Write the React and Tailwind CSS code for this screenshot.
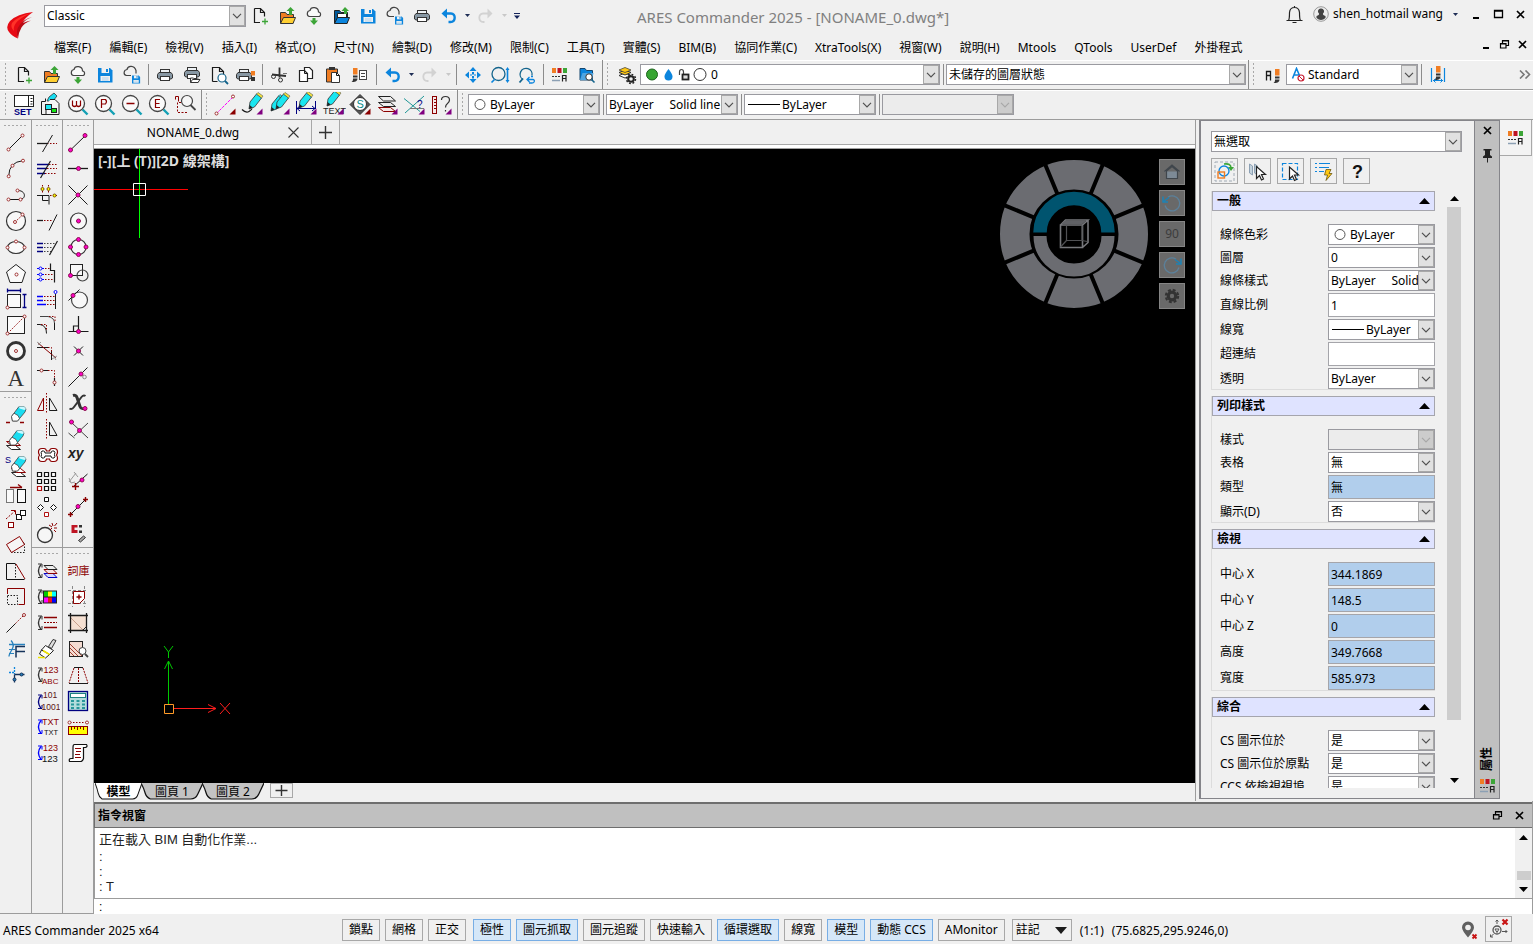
import React from 'react';

// ---------- Drawing helpers ----------
const L = ({ d, c = '#1a1a1a', f = 'none', w = 1, dash }) => (
  <path d={d} stroke={c} fill={f} strokeWidth={w} strokeDasharray={dash} />
);
const Node = ({ x, y, c = '#a03434', f = '#fff' }) => (
  <circle cx={x} cy={y} r="1.5" fill={f} stroke={c} />
);
const Snap = ({ x, y }) => (
  <circle cx={x} cy={y} r="2" fill="#ff00c8" stroke="#8c0f50" />
);
const Txt = ({ x, y, s = 8, c = '#8b0000', children, bold, italic, serif }) => (
  <text
    x={x}
    y={y}
    fontSize={s}
    fill={c}
    fontWeight={bold ? 700 : 400}
    fontStyle={italic ? 'italic' : 'normal'}
    fontFamily={serif ? 'Liberation Serif, serif' : 'Liberation Sans, Noto Sans CJK TC, sans-serif'}
  >
    {children}
  </text>
);
const Corner = ({ c = '#800080' }) => <path d="M16.5 22.5h6v-6z" fill={c} />;
const Lens = ({ children, c = '#444' }) => (
  <>
    <path d="M17.5 17.5l5 5" stroke="#14a0b4" strokeWidth="2.4" />
    <circle cx="11.5" cy="11.5" r="8" fill="#fafafa" stroke={c} strokeWidth="1.3" />
    {children}
  </>
);
const Pencil = ({ x = 0, y = 0, tip = '#f5e63c' }) => (
  <g transform={`translate(${x} ${y})`}>
    <path d="M10 17l1-7 6.500-8 5 4-7 9z" fill="#19e6f0" stroke="#333" strokeWidth=".8" />
    <path d="M17.500 2l1.500-1.500 5 3.500-1.500 2z" fill={tip} stroke="#555" strokeWidth=".6" />
    <path d="M10 17l.6-4 3 2.500z" fill="#222" />
  </g>
);
const Eraser = ({ y = 0 }) => (
  <g transform={`translate(0 ${y})`} stroke="#444" strokeWidth=".8">
    <path d="M8.500 14.500L16 4.500h5l2 2.500-1 3-7.500 9h-5z" fill="#19dcf0" />
    <path d="M8.500 14.500l2.500-3.300 4 2.300 1.500 3-2 2.500h-5z" fill="#fff" />
    <path d="M16 4.500h5l2 2.500-1.500 1-5-1.500z" fill="#c8f8ff" stroke="none" />
  </g>
);
const Cycle = ({ c = '#333', y = 0 }) => (
  <g transform={`translate(0 ${y})`} stroke={c} fill="none">
    <path d="M6 6.500Q1 12.500 6 19.500" strokeWidth="1.300" />
    <path d="M3 6h4v3.500M3 19.500h4v-3.500" />
  </g>
);
const Sheets = ({ a = '#222', b = '#8b0000', e = '#0000c8' }) => (
  <g strokeWidth="1">
    <path d="M9 15.500h9l4 4h-9z" fill="#d8d8ff" stroke={e} />
    <path d="M9 11.500h9l4 4h-9z" fill="#f6e0e0" stroke={b} />
    <path d="M9 7.500h9l4 4h-9z" fill="#eee" stroke={a} />
  </g>
);
const CloudShape = () => (
  <path
    d="M8.500 13.500h9c2.500 0 3-4 0-4.500 0-5-7.500-6-8.500-1.500-3.500.5-3.500 5.500-.5 6z"
    fill="#fafafa"
    stroke="#444"
    strokeWidth="1.200"
  />
);
const PrinterShape = ({ x = 0, y = 0 }) => (
  <g transform={`translate(${x} ${y})`}>
    <rect x="8.500" y="7.500" width="9" height="4" fill="#eef2f5" stroke="#333" />
    <path d="M7 10.500h12l1.500 2v3.500l-1.500 1h-12l-1.500-1v-3.500z" fill="#8797a3" stroke="#333" />
    <rect x="8.500" y="14.500" width="9" height="4" fill="#fff" stroke="#333" />
  </g>
);
const FloppyShape = ({ x = 6, y = 6, s = 1 }) => (
  <g transform={`translate(${x} ${y}) scale(${s})`}>
    <path d="M0 0h12l2.500 2.500v12H0z" fill="#0c85dd" />
    <rect x="3.500" y="0" width="7.500" height="5" fill="#f0f0f0" />
    <rect x="8" y="1" width="2" height="3" fill="#0c85dd" />
    <rect x="2.500" y="8" width="9.500" height="5" fill="#f0f0f0" />
    <path d="M4 10h6.500M4 12h6.500" stroke="#8cc3ec" strokeWidth=".7" />
  </g>
);
const PaletteBars = () => (
  <>
    <rect x="5" y="6" width="4" height="5" fill="#f07d23" />
    <rect x="10.500" y="6" width="4" height="5" fill="#be1423" />
    <rect x="16" y="6" width="4" height="5" fill="#3ca537" />
    <path d="M5 14.500h8" stroke="#333" strokeDasharray="2 1" />
    <path d="M5 18.500h8" stroke="#8ca0b4" strokeWidth="1.500" />
    <path d="M15.500 19.500v-6h3.500v6M15.500 16.500h3.500" stroke="#222" fill="none" strokeWidth="1.200" />
  </>
);
const BrushShape = ({ x = 0, y = 0 }) => (
  <g transform={`translate(${x} ${y})`}>
    <rect x="2" y="0" width="4.500" height="6.500" fill="#f07d23" />
    <rect x="2" y="7.500" width="4.500" height="2" fill="#333" />
    <path d="M2 10.500h4.500c0 3-3 3.500-6 3.500 1.500-1 1.500-2 1.500-3.500z" fill="#333" />
  </g>
);

const dots = '1.500 1.500';
const R = '#8b0000';
const N = '#000080';
const B = '#0000ff';

// ---------- Icons, all on a 25 x 25 grid ----------
const ICONS = {
  newFile: (
    <>
      <L d="M7.500 5.500h6l4 4v4M7.500 5.500v14h5.500M13.500 5.500v4h4" w={1.2} />
      <L d="M15 18.500h6M18 15.500v6" c="#3ca537" w={1.3} />
    </>
  ),
  open: (
    <>
      <path d="M6.500 20V9.500h5l1.500 2h6.500V20z" fill="#f07d23" stroke="#333" />
      <path d="M6.500 20.500l3-6h12l-2.500 6z" fill="#ffcf32" stroke="#333" />
      <path d="M15 12V8h-2.500L16.500 4l4 4H18v4z" fill="#3ca537" />
    </>
  ),
  openBlue: (
    <>
      <path d="M6.500 20V7.500h5l1.500 2h6.500V20z" fill="#005a9b" stroke="#222" />
      <path d="M9.500 10.500h9v6h-9z" fill="#fff" stroke="#222" />
      <path d="M6.500 20.500l3-6h12l-2.500 6z" fill="#0c85dd" stroke="#222" />
      <path d="M16 11V8h-2.500L17 4l4 4H19v3z" fill="#3ca537" />
    </>
  ),
  cloudDown: (
    <>
      <CloudShape />
      <path d="M11.500 15h3v2.500H17L13 22l-4-4.500h2.500z" fill="#3ca537" />
    </>
  ),
  save: <FloppyShape />,
  cloudSave: (
    <>
      <path d="M12 13.500H7.500c-3.500-.5-3-5.500.5-6 1-4.500 7.500-4 9 1v3" fill="none" stroke="#444" strokeWidth="1.200" />
      <FloppyShape x={13} y={13.5} s={0.56} />
    </>
  ),
  printer: <PrinterShape />,
  printBatch: (
    <>
      <PrinterShape y={-2} />
      <path d="M11.500 20v-4h3l1 1h4v3z" fill="#fff" stroke="#333" />
      <path d="M11.500 20.500l2-3h7.500l-2 3z" fill="#fff" stroke="#333" />
    </>
  ),
  preview: (
    <>
      <L d="M6.500 19.500v-14h7l4 4v3M13.500 5.500v4h4M6.500 19.500h5" w={1.2} />
      <circle cx="16" cy="16" r="4" fill="#fff" stroke="#14648c" strokeWidth="1.200" />
      <L d="M19 19l3 3" c="#14648c" w={1.8} />
    </>
  ),
  printStyle: (
    <>
      <PrinterShape x={-2} />
      <rect x="18" y="9" width="4" height="4.500" fill="#f07d23" />
      <rect x="18" y="15" width="4" height="4" fill="#333" />
    </>
  ),
  cut: (
    <>
      <L d="M13.500 5.500v10M6 12.500l14 1.500" w={1.8} c="#333" />
      <circle cx="7.500" cy="14.500" r="2" fill="none" stroke="#333" />
      <circle cx="14.500" cy="18" r="2" fill="none" stroke="#333" />
      <L d="M17 11.500h4" c="#777" />
    </>
  ),
  copy: (
    <>
      <path d="M11.500 5.500h5l3 3v8h-8z" fill="#fff" stroke="#222" strokeWidth="1.200" />
      <path d="M6.500 8.500h5l3 3v8h-8z" fill="#fff" stroke="#222" strokeWidth="1.200" />
      <L d="M11.500 8.500v3h3" />
    </>
  ),
  paste: (
    <>
      <path d="M6.500 7h11v13h-11z" fill="#f07d23" stroke="#333" />
      <rect x="9" y="5" width="6" height="3" fill="#333" />
      <path d="M11.500 10.500h5l3 3v7h-8z" fill="#fff" stroke="#333" />
      <L d="M16.500 10.500v3h3" />
    </>
  ),
  matchProps: (
    <>
      <BrushShape x={4} y={6} />
      <rect x="12.500" y="8.500" width="7" height="9" fill="#fff" stroke="#444" />
      <L d="M14 11.500h4M14 14.500h4" c="#444" />
    </>
  ),
  undo: (
    <>
      <path d="M7 10.500h8c5 0 5 8.500-.5 8.500h-2" fill="none" stroke="#0c85dd" strokeWidth="2.400" />
      <path d="M5.500 10.500l5.500-5v10z" fill="#0c85dd" />
    </>
  ),
  redo: (
    <>
      <path d="M18 10.500h-8c-5 0-5 8.500.5 8.500h1" fill="none" stroke="#d2d2d2" strokeWidth="1.800" />
      <path d="M19.500 10.500l-5-5v10z" fill="#d2d2d2" />
    </>
  ),
  pan: (
    <g fill="#0c85dd">
      <path d="M13 5l3.500 4h-7zM13 21l3.500-4h-7zM5 13l4-3.500v7zM21 13l-4-3.500v7z" />
      <path d="M12 10h2v2.500h-2zM12 14h2v2.500h-2zM10 12.500h2v1h-2zM14 12.500h2v1h-2z" />
    </g>
  ),
  zoomDyn: (
    <>
      <circle cx="11.500" cy="12" r="6.500" fill="none" stroke="#14648c" strokeWidth="1.300" />
      <L d="M7.500 17.500l-3 3M20.500 7v12" c="#0c85dd" w={1.600} />
      <path d="M20.500 5l2 3h-4zM20.500 21l2-3h-4z" fill="#0c85dd" />
    </>
  ),
  zoomPrev: (
    <>
      <path d="M9 17.500a6 6 0 1 1 9-4" fill="none" stroke="#14648c" strokeWidth="1.300" />
      <L d="M9 16.500l-3.500 4" c="#14648c" w={1.800} />
      <path d="M13 17.500h6c2 0 2 3.500-1 3.500h-3M15.500 15l-2.500 2.500 2.500 2.500M17 14.500h2" fill="none" stroke="#0c85dd" strokeWidth="1.300" />
    </>
  ),
  props: <PaletteBars />,
  refs: (
    <>
      <path d="M6 18V6.500h5l1.500 2h6V18z" fill="#0c85dd" stroke="#14466e" />
      <path d="M6 18l2.500-7h11L18 18z" fill="#50a5e1" />
      <circle cx="15" cy="15" r="3.200" fill="#fff" stroke="#333" />
      <L d="M17.500 17.500l3 3" w={1.600} c="#14648c" />
    </>
  ),
  layersGear: (
    <>
      <path d="M5 13.500l6-2.500 6 2.500-6 2.500z" fill="#fff" stroke="#333" />
      <path d="M5 10.500l6-2.500 6 2.500-6 2.500z" fill="#ffc814" stroke="#333" />
      <path d="M5 8l6-2.500L17 8l-6 2.500z" fill="#ffc814" stroke="#333" strokeWidth=".7" />
      <circle cx="17" cy="17" r="2.800" fill="#f0f0f0" stroke="#222" strokeWidth="2" />
      <circle cx="17" cy="17" r="4.500" fill="none" stroke="#222" strokeWidth="1.500" strokeDasharray="1.800 1.730" />
    </>
  ),
  textStyle: (
    <>
      <L d="M6.500 18.500v-9h4v9M6.500 13.500h4" w={1.3} />
      <BrushShape x={13} y={7} />
    </>
  ),
  dimStyle: (
    <>
      <L d="M6.500 6v14M19.500 6v14" c="#0c85dd" w={1.2} />
      <BrushShape x={9} y={4} />
      <L d="M8 18.500h10M10.500 16.500l-2 2 2 2M15.500 16.500l2 2-2 2" c="#0c85dd" />
    </>
  ),
  setWin: (
    <>
      <rect x="3.500" y="3.500" width="19" height="11" fill="#fff" stroke="#222" />
      <L d="M17.500 3.500v11M19.500 6.500h2M19.500 9.500h2M19.500 12h2" />
      <Txt x={3} y={23} s={9} c={N} bold>SET</Txt>
    </>
  ),
  layersIso: (
    <>
      <L d="M3.500 22.500v-13h4v-3M3.500 22.500h6" />
      <path d="M9 9l2-4 5-4 3 3-4 5z" fill="#19dcf0" stroke="#333" strokeWidth=".8" />
      <path d="M12 7.500h5l4 4v11h-13v-6" fill="#f6f6f6" stroke="#222" />
      <rect x="7.500" y="12.500" width="6" height="5" fill="#19e6f0" stroke="#222" />
      <rect x="13.500" y="16.500" width="5" height="4" fill="#14e614" stroke="#222" />
    </>
  ),
  zoomW: <Lens><path d="M7.500 8.500v5q2 2 4 0v-4.500 4.500q2 2 4 0v-5" stroke={R} fill="none" strokeWidth="1.200" /></Lens>,
  zoomP: <Lens><path d="M9.500 16v-8.500h4q2 2 0 4.500h-4" stroke={R} fill="none" strokeWidth="1.200" /></Lens>,
  zoomMinus: <Lens><L d="M7.500 11.500h8" c={R} w={1.5} /></Lens>,
  zoomE: <Lens><path d="M14 7.500h-4.500v8h4.500M9.500 11.500h4" stroke={R} fill="none" strokeWidth="1.200" /></Lens>,
  zoomSel: (
    <>
      <L d="M8 10.500h-3.500v10h10" c={R} dash="2 1.500" />
      <L d="M2.500 7.500v-3h3v5" c={R} />
      <circle cx="14" cy="9" r="5.500" fill="#f6f6f6" stroke="#444" strokeWidth="1.200" />
      <L d="M17.500 13l5 5" c="#444" w={1.800} />
    </>
  ),
  lineTool: (
    <>
      <L d="M3.500 21.500L20 5" c="#ff00ff" dash="3 1" />
      <Node x={3.5} y={21.5} />
      <Node x={20} y={4.5} />
      <Corner c="#8b0000" />
    </>
  ),
  pencilCurve: (
    <>
      <L d="M2 17.500q4 4 7 2t3-3" w={1.2} />
      <Pencil x={-1} />
      <Corner />
    </>
  ),
  hatchPens: (
    <>
      <g transform="translate(-6 2)"><Pencil tip="#19e6f0" /></g>
      <Pencil x={-1} />
      <Corner />
    </>
  ),
  dimTool: (
    <>
      <Pencil x={-5} y={-1} />
      <L d="M2.500 9v13M21.500 9v8M3 16.500h18M6 14l-3 2.500 3 2.500M18 14l3 2.500-3 2.500" c={N} />
      <Corner />
    </>
  ),
  textTool: (
    <>
      <g transform="translate(-4 -3)"><Pencil /></g>
      <Txt x={2} y={22} s={9} c="#222">TEXT</Txt>
      <Corner />
    </>
  ),
  symTool: (
    <>
      <path d="M12 2.500l10 10-10 10-10-10z" fill="#555" stroke="#333" />
      <circle cx="12" cy="12" r="6.500" fill="#fff" stroke="#333" />
      <Txt x={8.5} y={16} s={11} c="#0a8c8c">S</Txt>
      <Corner c="#8b0000" />
    </>
  ),
  layerTool: (
    <>
      <path d="M3.500 15.500h12l5 4h-12z" fill="#f6e6e6" stroke={R} />
      <path d="M3.500 10.500h12l5 4h-12z" fill="#eee" stroke="#222" />
      <path d="M3.500 4.500h12l5 4.500h-12z" fill="#eee" stroke="#222" />
      <Corner />
    </>
  ),
  angleTool: (
    <>
      <L d="M2 6.500l16 13M22 4L3 21" c="#1e9696" />
      <Txt x={15} y={16} s={10} c={N}>?</Txt>
      <L d="M8 16.500h14" c="#777" />
      <Corner />
    </>
  ),
  rulerAsk: (
    <>
      <rect x="3.500" y="4.500" width="4" height="17" fill="#f6eaea" stroke={R} />
      <L d="M5 7.500h2M5 10.500h2M5 13.500h2M5 16.500h2" c={R} />
      <L d="M12.500 8q0-3.500 4-3.500t4 3.500q0 2-2 3.500t-2 4M16.500 18v1.500" c="#333" w={1.2} />
      <Corner />
    </>
  ),
  // draw column
  line: <><L d="M5.500 19.500l14-14" /><Node x={5.5} y={19.5} /><Node x={19.5} y={5.5} /></>,
  arc: <><L d="M5.700 20Q6 6 20 4.700" /><Node x={5.7} y={20.3} /><Node x={9.5} y={9.7} /><Node x={20} y={4.7} /></>,
  polyline: <><L d="M5.500 17.500h12c6-1 5-9-2.500-9" /><Node x={5.5} y={17.5} /><Node x={17.5} y={17.5} /><Node x={14.5} y={8.5} /></>,
  circle: <><circle cx="13" cy="13" r="9.500" fill="#f8f8f8" stroke="#333" strokeWidth="1.200" /><L d="M12 14l7.500-7" c={R} dash={dots} /><Node x={12} y={14} /><Node x={19.5} y={6.5} /></>,
  ellipse: <><ellipse cx="13" cy="13.500" rx="8.500" ry="6" fill="#fafafa" stroke="#333" strokeWidth="1.200" /><Node x={4.5} y={13.5} /><Node x={21.5} y={13.5} /><Node x={13} y={7.5} /></>,
  polygon: <><path d="M13 4.500l9.500 7.500-3.500 10.500h-12L3.500 12z" fill="#fafafa" stroke="#222" /><Node x={13.5} y={14.5} /></>,
  rectDim: (
    <>
      <rect x="4.500" y="8.500" width="13" height="13" fill="#fafafa" stroke="#222" />
      <L d="M4.500 2.500v4M17.500 2.500v4M4.500 4.500h13M19.500 8.500h4M19.500 21.500h4M21.500 8.500v13" c={N} w={1.3} />
      <Node x={4.5} y={21.5} />
    </>
  ),
  rect: <><rect x="4.500" y="4.500" width="17" height="17" fill="#fafafa" stroke="#222" /><L d="M5 21L21 5" c={R} dash={dots} /><Node x={4.5} y={21.5} /><Node x={21.5} y={4.5} /></>,
  donut: <><circle cx="13" cy="13" r="8.500" fill="#f8f8f8" stroke="#333" strokeWidth="2.800" /><Node x={13} y={13} /></>,
  text: <Txt x={4.5} y={21.5} s={23} c="#333" serif>A</Txt>,
  erase: <><Eraser /><L d="M3 20.500h4M17 20.500h4" c={R} w={1.4} /></>,
  eraseLayer: (
    <>
      <path d="M3.500 17.500h9l5 4h-9z" fill="#fff" stroke="#222" />
      <path d="M3.500 13.500h9l5 4h-9z" fill="#fff" stroke={R} />
      <g transform="translate(-2 -2)"><Eraser /></g>
    </>
  ),
  eraseS: (
    <>
      <path d="M8.500 18.500h9l5 4h-9z" fill="#fff" stroke="#222" />
      <path d="M8.500 14.500h9l5 4h-9z" fill="#fff" stroke={R} />
      <Eraser y={-2} />
      <Txt x={2} y={9} s={9} c={N}>S</Txt>
    </>
  ),
  copyRect: (
    <>
      <rect x="3.500" y="9.500" width="7" height="13" fill="#fafafa" stroke="#777" />
      <rect x="14.500" y="9.500" width="8" height="13" fill="#fafafa" stroke="#111" />
      <L d="M7 7.500h12M15 4.500l4 3" c={R} w={1.3} />
    </>
  ),
  arrayMove: (
    <>
      <rect x="5.500" y="16.500" width="5" height="5" fill="#fff" stroke={R} />
      <rect x="13.500" y="8.500" width="5" height="5" fill="#fff" stroke="#111" />
      <rect x="17.500" y="4.500" width="5" height="5" fill="#fff" stroke="#111" />
      <L d="M3 13L12 5" c={R} dash="2 1.500" />
      <L d="M8 4.500h4.500v4" c={R} />
    </>
  ),
  rotate: (
    <>
      <rect x="7.500" y="10.500" width="14" height="10" fill="none" stroke="#222" strokeDasharray={dots} />
      <path d="M3.500 12.500l13-8 5 8-13 8z" fill="#f6f6f6" stroke={R} />
    </>
  ),
  stretch: <><path d="M12.500 5.500h-9v16h18" fill="none" stroke="#111" /><L d="M12.500 6v15" dash={dots} /><L d="M13 6l9 15" c={R} /></>,
  scale: <><L d="M4.500 10v-5.500h17v16h-6" c={R} /><L d="M4.500 11.500h10v9h-10z" dash={dots} /></>,
  lengthen: <><L d="M3.500 22.500l9-9" /><L d="M12.500 13.500l7.500-7.500" c={R} dash={dots} /><Node x={21} y={5} /></>,
  alignSp: (
    <>
      <L d="M6 8.500h16M8 4.500q4 4 1 9t-3 7" c="#2882be" w={1.3} />
      <L d="M6 13.500h6M6 17.500h5" c="#2882be" />
      <L d="M22 10.500h-9v11M13 15.500h9" w={1.5} c="#14325a" />
    </>
  ),
  joinPt: (
    <>
      <L d="M6 10.500h6M11.500 5v7" c="#0c85dd" dash="2 1" w={1.3} />
      <L d="M11.500 12.500h10M11.500 12.500v8" w={1.3} c="#14325a" />
      <Node x={11.5} y={17.5} c="#14325a" f="#2882be" />
      <Node x={18.5} y={12.5} c="#14325a" f="#2882be" />
    </>
  ),
  // modify column
  trim: <><L d="M2 13.500h10" w={1.3} /><L d="M12 13.500h10" c={R} dash={dots} /><L d="M7.500 22l10-17" /></>,
  trimMulti: (
    <>
      <L d="M2 8.500h12M2 12.500h10M2 17.500h8" c={N} w={1.3} />
      <L d="M14 8.500h8M12 12.500h10M10 17.500h12" c={R} dash={dots} />
      <L d="M5.500 22l10-17" w={1.2} />
    </>
  ),
  trimCorner: (
    <>
      <L d="M2 13.500h12v9M7.500 13.500v5h6" />
      <L d="M7.500 3v8M13.500 3v8M15 13.500h7" c={R} dash={dots} />
      <Node x={7.5} y={7} f="#ff0" c="#785000" /><Node x={13.5} y={7} f="#ff0" c="#785000" /><Node x={19.5} y={13.5} f="#ff0" c="#785000" />
    </>
  ),
  extend: <><L d="M2 12.500h6" w={1.3} /><L d="M9 12.500h8" c={R} dash={dots} /><L d="M14 22.500l8-16" /></>,
  extendMulti: (
    <>
      <L d="M2 9.500h6M2 13.500h6M2 17.500h6" c={N} w={1.3} />
      <L d="M9 9.500h11M9 13.500h9M9 17.500h7" c="#444" dash={dots} />
      <L d="M14.500 21l8-14" w={1.2} />
    </>
  ),
  extendEdge: (
    <>
      <L d="M7 8.500h8M7 14.500h11M7 19.500h11" c={R} dash={dots} />
      <L d="M2 8.500h7M2 14.500h7M2 19.500h7" c={B} />
      <L d="M15.500 3.500v7h4v12" w={1.2} />
      <Node x={5.5} y={8.5} c={B} /><Node x={5.5} y={14.5} c={B} /><Node x={5.5} y={19.5} c={B} />
    </>
  ),
  extendFence: (
    <>
      <L d="M2 10.500h6M2 14.500h6M2 18.500h9" c={B} w={1.3} />
      <L d="M9 10.500h11M9 14.500h11M12 18.500h8" c={R} dash={dots} />
      <L d="M20.500 8v15" /><Node x={20.5} y={6} c={B} />
    </>
  ),
  fillet: (
    <>
      <L d="M5 4.500h8q6.500 1 6.500 7" c="#444" />
      <L d="M14 4.500h6v6" c={R} dash={dots} />
      <L d="M19.500 11v7M2 12.500h3q6.500 1 6.500 9" />
      <L d="M6 12.500h5.500v6" c={R} dash={dots} />
    </>
  ),
  chamfer: (
    <>
      <L d="M2 9.500h11M16.500 13v9" />
      <L d="M13 9.500h3.500v4" dash={dots} c={R} />
      <L d="M3 5l18 15" c={R} />
      <L d="M2 4l4 3M6 4L3 7M18 17l3 5M22 18l-5 3" c="#999" />
    </>
  ),
  join: (
    <>
      <L d="M2 6.500h11M19.500 14v8" w={1.2} />
      <L d="M13 6.500h6.500v8" c={R} dash={dots} />
      <Node x={6.5} y={6.5} /><Node x={19.5} y={18.5} />
    </>
  ),
  mirror: (
    <>
      <L d="M8.500 8v12.500h-6z" c={R} /><L d="M11.500 3v20" c={R} dash={dots} /><L d="M14.500 8v12.500h7.500z" />
    </>
  ),
  mirrorHalf: <><L d="M11.500 3v20" c={R} dash={dots} /><L d="M14.500 6v13.500h7.500z" /></>,
  bone: (
    <>
      <path d="M7 6.500h2q2 0 2.500 2.500h3q.5-2.500 2.500-2.500h2q3.500 0 3.500 3.500 0 1.500-1 3 1 1.500 1 3 0 3.500-3.500 3.500h-2q-2 0-2.500-2.500h-3q-.5 2.500-2.500 2.500h-2q-3.500 0-3.500-3.500 0-1.500 1-3-1-1.500-1-3 0-3.500 3.500-3.500z" fill="#fff" stroke={R} strokeWidth="1.200" />
      <path d="M7 9h1.500q1.500 0 1.500 2h6q0-2 1.500-2H19q1.500 1 .5 3.500 1 2.500-.5 3.500h-1.500q-1.500 0-1.500-2h-6q0 2-1.500 2H7q-1.500-1-.5-3.500Q5.500 10 7 9z" fill="#fff" stroke="#111" />
    </>
  ),
  grid: (
    <g fill="#fff" stroke="#111" strokeWidth="1.200">
      <path d="M2.500 4.500h4v4h-4zM9.500 4.500h4v4h-4zM16.500 4.500h4v4h-4zM2.500 11.500h4v4h-4zM9.500 11.500h4v4h-4zM16.500 11.500h4v4h-4zM9.500 18.500h4v4h-4zM16.500 18.500h4v4h-4z" />
      <path d="M2.500 18.500h4v4h-4z" stroke="#b01010" />
    </g>
  ),
  polar: (
    <g fill="#fff" stroke="#111">
      <path d="M9.500 3.500h4v4h-4zM5.500 10.500l3 3-3 3-3-3zM18.500 10.500l3 3-3 3-3-3z" />
      <path d="M9.500 18.500h4v4h-4z" stroke="#b01010" />
    </g>
  ),
  explode: (
    <>
      <circle cx="10" cy="15" r="7.500" fill="#f6f6f6" stroke="#333" strokeWidth="1.300" />
      <L d="M15 10l2-2M17 3l1 3M22 3l-2.500 3M22 8h-3M14 5l3 2M19 10l2 2" c={R} />
    </>
  ),
  chLayer: <><Cycle /><Sheets /></>,
  chColor: (
    <>
      <Cycle />
      <rect x="8" y="6.500" width="14" height="13" fill="#222" />
      <path d="M9 7.500h4v5H9z" fill="#0c0" /><path d="M13 7.500h4v5h-4z" fill="#ff0" /><path d="M17 7.500h4v5h-4z" fill="#0ff" />
      <path d="M9 13.500h4v5H9z" fill="#f0f" /><path d="M13 13.500h4v5h-4z" fill="#f01414" /><path d="M17 13.500h4v5h-4z" fill="#00f" />
    </>
  ),
  chLine: <><Cycle /><L d="M9 7.500h13M9 17.500h13" c={R} w={1.3} /><L d="M9 12.500h13" c={R} dash="2 1" /></>,
  paintBrush: (
    <>
      <path d="M18 3.500l3 1-4.500 8-3-2z" fill="#ddd" stroke="#333" />
      <path d="M10.500 9.500l8 5-4 4-8-4.500z" fill="#fff" stroke="#222" />
      <path d="M6.500 14l8 4.500-4 3.500-6-4z" fill="#fff" stroke="#222" />
      <path d="M8 14.500l6.500 4M3 21.500h7" stroke="#f0e600" strokeWidth="1.500" />
    </>
  ),
  chAbc: <><Cycle /><Txt x={8.5} y={11} s={9}>123</Txt><Txt x={7} y={21.500} s={8}>ABC</Txt></>,
  chBits: <><Cycle c={N} y={1} /><Txt x={8} y={10} c="#5a1414" s={8.5}>101</Txt><Txt x={6.500} y={22} c="#5a1414" s={8.5}>1001</Txt></>,
  chTxt: <><Cycle c={B} /><Txt x={7} y={11} s={9}>TXT</Txt><Txt x={9} y={21} s={7.5} c="#111">TXT</Txt></>,
  chNum: <><Cycle c={B} /><Txt x={8} y={10.5} s={9}>123</Txt><Txt x={7} y={22} s={9.5} c="#111">123</Txt></>,
  // snap column
  sEnd: <><L d="M5 19.500l14.500-14" /><Snap x={4.5} y={20} /><Snap x={19} y={5.5} /></>,
  sMid: <><L d="M2 12.500h20" w={1.3} /><Snap x={12.5} y={12.5} /></>,
  sInt: <><L d="M2.500 3.500l19 19M21.500 3.500l-19 19" /><Snap x={12} y={13} /></>,
  sCen: <><circle cx="12.500" cy="13" r="8" fill="#f8f8f8" stroke="#333" strokeWidth="1.200" /><Snap x={12.5} y={13} /></>,
  sQuad: <><circle cx="12.500" cy="13" r="7.500" fill="#f8f8f8" stroke="#333" strokeWidth="1.200" /><Snap x={12.5} y={5.5} /><Snap x={12.5} y={20.5} /><Snap x={4.5} y={13} /><Snap x={20} y={13} /></>,
  sIns: <><rect x="4.500" y="4.500" width="12" height="11" fill="#f8f8f8" stroke="#222" /><circle cx="16.500" cy="15.500" r="5.500" fill="none" stroke="#444" strokeWidth="1.200" /><Snap x={4.5} y={15.5} /></>,
  sTan: <><circle cx="13.500" cy="14" r="8" fill="#f8f8f8" stroke="#444" strokeWidth="1.200" /><L d="M2.500 14.500l11-11" /><Snap x={7} y={9.5} /></>,
  sPerp: <><L d="M12.500 4v15M2.500 19.500h20M7.500 19v-5h5" w={1.2} /><Snap x={12.5} y={19.5} /></>,
  sPoint: <><L d="M8 8.500l9 9M17 8.500l-9 9" /><Snap x={12.5} y={13} /></>,
  sNear: <><L d="M2.500 22.500l19-19" /><Snap x={15} y={10} /><circle cx="18.500" cy="13" r="1.800" fill="none" stroke="#888" /></>,
  sNone: <><L d="M7 5.500q3-1 4 2l3 9q1 2.500 3 2" w={3} c="#333" /><L d="M19.500 6q-2-1.500-4 1L8 17q-2 3-4.500 1.500" w={2} c="#333" /><Snap x={19} y={18.5} /></>,
  sApp: <><L d="M2.500 17l6 5M8 20l14-13M6 7l16 15" c="#444" /><Snap x={5.5} y={6} /><Snap x={13.5} y={14.5} /></>,
  sXy: <Txt x={2} y={16} s={14} c="#222" bold italic>xy</Txt>,
  sFrom: <><L d="M7 19L21.500 6" /><L d="M3 14l7-9M3 10l2 5 4-1M8 4l4 5" c="#999" /><Snap x={16} y={12} /><L d="M6 18.500h7M9.500 15v7" c={R} w={1.4} /></>,
  sMid2: <><L d="M4.500 20.500L19 6" /><L d="M2 20.500h5M4.500 18v5M17 5.500h5M19.500 3v5" c={R} w={1.4} /><Snap x={12} y={12.5} /></>,
  sMagnet: (
    <>
      <path d="M5.500 5h6v2.500H8.500v2.500h3v3h-6z" fill="#be1423" />
      <path d="M13 5h3v2.500h-3zM13 10.500h3V13h-3z" fill="#333" />
      <path d="M12.500 20.500l5-4.500 2 1.500-5 4.500z" fill="#aaa" stroke="#333" />
    </>
  ),
  dict: <Txt x={1.5} y={16.5} s={11}>詞庫</Txt>,
  region: (
    <>
      <L d="M2 6.500h20M2 19.500h20M6.500 2v21M18.500 2v21" c="#888" dash="3 2" />
      <path d="M7.500 7.500h11v7l-5 5h-6z" fill="#fff" stroke={R} />
      <L d="M13 10.500v5M10.500 13h5" c={R} w={1.4} />
    </>
  ),
  clip: (
    <>
      <path d="M4.500 5.500h16v11l-4 4h-12z" fill="#f5e0d2" stroke="#222" />
      <L d="M5 8l12 12" c="#c8a08c" />
      <L d="M2 5.500h20M4.500 3v20M20.500 3v20M2 20.500h20" w={1.3} />
    </>
  ),
  clipZoom: (
    <>
      <rect x="3.500" y="5.500" width="13" height="15" fill="#f5dcd2" stroke="#222" />
      <L d="M4 8l12 12M4 12l8 8M4 16l4 4" c="#a04030" />
      <circle cx="16.500" cy="15" r="3.500" fill="#fff" stroke="#444" /><L d="M19 18l3 3" c="#444" w={1.8} />
    </>
  ),
  loft: <><L d="M8 5.500h9M3 21.500h19" w={1.2} /><L d="M8 6L3 21M17 6l5 15M12.500 6v15" c={R} dash="2 1" /></>,
  calc: (
    <>
      <rect x="2.500" y="3.500" width="19" height="19" fill="#b4dcdc" stroke={N} strokeWidth="1.300" />
      <rect x="4.500" y="5.500" width="15" height="4" fill="#fff" stroke="#1e8282" />
      <g fill="#28969a"><path d="M5 12h3v2H5zM10.500 12h3v2h-3zM16 12h3v2h-3zM5 15.500h3v2H5zM10.500 15.500h3v2h-3zM16 15.500h3v2h-3zM5 19h3v2H5zM10.500 19h3v2h-3zM16 19h3v2h-3z" /></g>
    </>
  ),
  ruler: (
    <>
      <L d="M4 8.500h17" c={R} dash={dots} /><Node x={3.5} y={8.5} /><Node x={21} y={8.5} />
      <rect x="2.500" y="12.500" width="19" height="8" fill="#ff0" stroke={R} />
      <L d="M5.500 13v3M8.500 13v2M11.500 13v3M14.500 13v2M17.500 13v3" c={R} />
    </>
  ),
  script: (
    <>
      <path d="M8.500 4.500h12q1.500 2-1 3h-2v11q-1 3-3 3h-11q-1-3 1.500-3h2v-11q0-3 1.500-3z" fill="#fff" stroke="#111" strokeWidth="1.200" />
      <L d="M9 8.500h6M10 11.500h5M9 14.500h5M9 17.500h6" c={R} />
    </>
  ),
  // properties palette
  pSelect: (
    <>
      <rect x="3" y="3" width="19" height="19" fill="none" stroke="#a0aab4" strokeDasharray="3 2" />
      <circle cx="12" cy="12" r="5" fill="none" stroke="#0c85dd" strokeWidth="1.300" />
      <rect x="6" y="13" width="6.500" height="6" fill="none" stroke="#f07d23" strokeWidth="1.400" />
      <path d="M12 5q7-1 7 4" fill="none" stroke="#3ca537" strokeWidth="1.600" /><path d="M16 8h6l-3 4z" fill="#3ca537" />
    </>
  ),
  pFilter: (
    <>
      <path d="M4.500 5l3 2v9l-3-2zM9.500 5l3 2v9l-3-2z" fill="#c3d2dc" stroke="#8ca0b4" />
      <path d="M11.500 7.500v12l3-3 2 4.500 2-1-2-4.500h4z" fill="#fff" stroke="#222" strokeWidth="1.200" />
    </>
  ),
  pPick: (
    <>
      <rect x="4.500" y="4.500" width="15" height="16" fill="none" stroke="#0c85dd" strokeDasharray="4 2" strokeWidth="1.200" />
      <path d="M11.500 8v12l3-3 2 4.500 2-1-2-4.500h4z" fill="#fff" stroke="#222" strokeWidth="1.200" />
    </>
  ),
  pQuick: (
    <>
      <L d="M4 4.500h2M4 8.500h2M4 12.500h2M8 4.500h11M8 8.500h10M8 12.500h5" c="#0c85dd" w={1.2} />
      <path d="M15 10.500h5l-2 4h3l-6 7 1.500-5.500h-3z" fill="#ffc814" stroke="#5a4600" strokeWidth=".7" />
    </>
  ),
  pHelp: <Txt x={8} y={19} s={18} c="#111" bold>?</Txt>,
};

const Icon = ({ name }) => (
  <svg className="block h-[25px] w-[25px] shrink-0" viewBox="0 0 25 25" fill="none" aria-hidden="true">
    {ICONS[name]}
  </svg>
);

const ToolButton = ({ name }) => (
  <button type="button" aria-label={name} className="flex h-[25px] w-[27px] shrink-0 justify-center hover:bg-[#d5e7f8]">
    <Icon name={name} />
  </button>
);

const Arrow = ({ dim, width = 'w-[10px]' }) => (
  <button type="button" aria-label="more" className={`flex ${width} shrink-0 items-center justify-center`}>
    <svg className="h-[3px] w-[5px]" viewBox="0 0 5 3"><path d="M0 0h5L2.500 3z" fill={dim ? '#c8c8c8' : '#1e2d55'} /></svg>
  </button>
);

const Sep = () => (
  <span className="flex h-[21px] w-[6px] shrink-0 justify-center">
    <span className="w-px bg-[#8c8c8c]" />
  </span>
);

const GripDots = () => (
  <span className="h-[25px] w-[3px] shrink-0 bg-[radial-gradient(circle,#a8a8a8_1px,transparent_1px)] bg-[length:3px_4px]" />
);

const BarBreak = () => (
  <span className="flex w-[13px] shrink-0 items-center gap-[3px] self-stretch pl-[2px]">
    <span className="w-px self-stretch bg-[#8c8c8c]" />
    <GripDots />
  </span>
);

const Chevron = ({ dim }) => (
  <svg className="h-[6px] w-[10px]" viewBox="0 0 10 6" fill="none">
    <path d="M1 .8l4 4 4-4" stroke={dim ? '#a8a8a8' : '#505050'} strokeWidth="1.200" />
  </svg>
);

const Combo = ({ label, value, className = '', pad = 'pl-[2px]', adorn, disabled, id }) => (
  <div className={`relative shrink-0 border border-[#9a9aa0] ${disabled ? 'bg-[#ececec]' : 'bg-white'} ${className}`}>
    <select
      id={id}
      aria-label={label}
      disabled={disabled}
      className={`block h-full w-full appearance-none overflow-hidden bg-transparent pr-4 text-black outline-none ${pad}`}
    >
      <option>{value}</option>
    </select>
    {adorn && <span className="pointer-events-none absolute inset-y-0 left-[4px] flex items-center">{adorn}</span>}
    <span
      className={`pointer-events-none absolute inset-y-0 right-0 flex w-[16px] items-center justify-center border border-[#a8a8a8] ${
        disabled ? 'bg-[#cccccc]' : 'bg-[#e1e1e1]'
      }`}
    >
      <Chevron dim={disabled} />
    </span>
  </div>
);

const colorDot = (
  <svg className="h-[13px] w-[14px]" viewBox="0 0 14 13"><circle cx="7" cy="6.500" r="5" fill="#fff" stroke="#555" /></svg>
);
const weightLine = <span className="-ml-px block h-px w-8 bg-black" />;

const layerMarks = (
  <svg className="h-[15px] w-[62px]" viewBox="0 0 62 15" fill="none">
    <circle cx="7" cy="7.500" r="5.500" fill="#37a532" stroke="#1e641e" />
    <path d="M23.500 2q4 5 4 7.500a4 4 0 0 1-8 0q0-2.500 4-7.500z" fill="#0c85dd" />
    <path d="M34.500 8v-3q0-2.500 2-2.500t2 2.500v2" stroke="#444" strokeWidth="1.200" />
    <rect x="37.500" y="7.500" width="6" height="5" stroke="#222" strokeWidth="1.800" fill="#ddd" />
    <circle cx="55" cy="7.500" r="6" fill="#fff" stroke="#333" />
  </svg>
);
const styleMark = (
  <svg className="h-[15px] w-[15px]" viewBox="0 0 15 15" fill="none">
    <path d="M1.500 11.500l4-10 3 7M3 8h5" stroke="#0c85dd" strokeWidth="1.600" />
    <circle cx="10" cy="11" r="3" stroke="#c81e32" fill="#fff" strokeWidth="1.200" />
    <path d="M8 9l4 4" stroke="#c81e32" />
  </svg>
);

const MinIcon = () => <svg className="h-[11px] w-[11px]" viewBox="0 0 11 11"><path d="M2 8h6v2H2z" /></svg>;
const MaxIcon = () => (
  <svg className="h-[11px] w-[11px]" viewBox="0 0 11 11" fill="none"><path d="M1.500 1.500h8v7h-8zM1 2h9" stroke="#000" strokeWidth="1.300" /></svg>
);
const RestoreIcon = () => (
  <svg className="h-[11px] w-[11px]" viewBox="0 0 11 11" fill="none">
    <path d="M3.500 4V1.500h6v5H7.500M1.500 4.500h5.500v4.500H1.500zM3.500 2h6M1.500 5h5.500" stroke="#000" strokeWidth="1.200" />
  </svg>
);
const CloseIcon = () => (
  <svg className="h-[11px] w-[11px]" viewBox="0 0 11 11" fill="none"><path d="M2 2l7 7M9 2L2 9" stroke="#000" strokeWidth="1.700" /></svg>
);
const WinButton = ({ label, children }) => (
  <button type="button" aria-label={label} className="flex h-4 w-[18px] items-center justify-center">{children}</button>
);

// ---------- Header ----------
const MENUS = [
  '檔案(F)', '編輯(E)', '檢視(V)', '插入(I)', '格式(O)', '尺寸(N)', '繪製(D)', '修改(M)', '限制(C)', '工具(T)',
  '實體(S)', 'BIM(B)', '協同作業(C)', 'XtraTools(X)', '視窗(W)', '說明(H)', 'Mtools', 'QTools', 'UserDef', '外掛程式',
];

const Header = () => (
  <header className="flex h-[60px] shrink-0">
    <div className="w-[44px] shrink-0 pt-[10px] pl-[6px]">
      <svg className="h-[30px] w-[28px]" viewBox="0 0 28 30">
        <path d="M27 2Q11 4 4 11-1 17 3 22q3 4 9 6.500-2-6 2-12Q18 8 27 2z" fill="#e60a14" />
        <path d="M12 28.500q-3-8 2-14Q18 9 26 7q-6 2-9 6 4-2 8-2.500-7 2.500-9.500 7-3 5-3.500 11z" fill="#b90a14" />
        <path d="M6 13Q12 6 24 3.500 14 8 10 13q-3 4-2 8-4-4-2-8z" fill="#ff3228" />
      </svg>
    </div>
    <div className="flex min-w-0 flex-1 flex-col">
      <div className="flex h-8 items-start">
        <Combo label="Workspace" value="Classic" className="mt-[5px] h-[22px] w-[202px]" />
        <div className="flex shrink-0 pt-[3px]">
          {['newFile', 'open', 'cloudDown', 'openBlue', 'save', 'cloudSave', 'printer', 'undo'].map((n) => (
            <ToolButton key={n} name={n} />
          ))}
          <Arrow />
          <ToolButton name="redo" />
          <Arrow dim />
          <button type="button" aria-label="Customize" className="flex w-4 items-center justify-center">
            <svg className="h-[6px] w-[6px]" viewBox="0 0 6 6"><path d="M0 0h6v1H0zM0 2.500h6L3 6z" fill="#14235a" /></svg>
          </button>
        </div>
        <h1 className="min-w-0 flex-1 truncate pl-28 text-[15px] leading-[35px] text-[#808080]">
          ARES Commander 2025 - [NONAME_0.dwg*]
        </h1>
        <div className="flex h-7 shrink-0 items-center pr-1">
          <button type="button" aria-label="Notifications" className="mr-[9px]">
            <svg className="block h-[19px] w-[19px]" viewBox="0 0 19 19" fill="none">
              <path d="M1.500 15.500h16M3.500 15.500q1-1.500 1-8 .5-5 5-5t5 5q0 6.500 1 8M9.500 2.500v-1.500M7.500 17.500h4" stroke="#222" strokeWidth="1.200" />
            </svg>
          </button>
          <button type="button" className="flex items-center gap-1">
            <svg className="h-4 w-4" viewBox="0 0 16 16">
              <circle cx="8" cy="8" r="7.300" fill="#eee" stroke="#999" />
              <path d="M8 2.500a2.800 2.800 0 0 1 2 5q-.5 1.500 2.500 2.500v2q-4.500 4-9 0v-2q3-1 2.500-2.500a2.800 2.800 0 0 1 2-5z" fill="#444" />
            </svg>
            <span>shen_hotmail wang</span>
          </button>
          <Arrow width="w-[24px]" />
          <span className="flex gap-[4px]">
            <WinButton label="Minimize"><MinIcon /></WinButton>
            <WinButton label="Maximize"><MaxIcon /></WinButton>
            <WinButton label="Close"><CloseIcon /></WinButton>
          </span>
        </div>
      </div>
      <div className="flex h-7 items-center">
        <nav className="flex min-w-0 flex-1 gap-[18px] overflow-hidden pt-[3px] pl-[10px] whitespace-nowrap">
          {MENUS.map((m) => (
            <button key={m} type="button">{m}</button>
          ))}
        </nav>
        <div className="flex shrink-0 pr-[2px] pb-[3px]">
          <WinButton label="Minimize drawing"><MinIcon /></WinButton>
          <WinButton label="Restore drawing"><RestoreIcon /></WinButton>
          <WinButton label="Close drawing"><CloseIcon /></WinButton>
        </div>
      </div>
    </div>
  </header>
);

const Tools = ({ names }) => names.map((n) => <ToolButton key={n} name={n} />);

const Toolbars = () => (
  <>
    <div className="flex h-[30px] shrink-0 items-center border-b border-[#9c9c9c] shadow-[inset_0_1px_0_#fff]">
      <span className="flex w-[10px] shrink-0 justify-center"><GripDots /></span>
      <Tools names={['newFile', 'open', 'cloudDown', 'save', 'cloudSave']} />
      <Sep />
      <Tools names={['printer', 'printBatch', 'preview', 'printStyle']} />
      <Sep />
      <Tools names={['cut', 'copy', 'paste', 'matchProps']} />
      <Sep />
      <ToolButton name="undo" />
      <Arrow />
      <ToolButton name="redo" />
      <Arrow dim />
      <Sep />
      <Tools names={['pan', 'zoomDyn', 'zoomPrev']} />
      <Sep />
      <Tools names={['props', 'refs']} />
      <BarBreak />
      <ToolButton name="layersGear" />
      <Combo label="Layer" value="0" className="h-[21px] w-[300px]" pad="pl-[70px]" adorn={layerMarks} />
      <Sep />
      <Combo label="Layer state" value="未儲存的圖層狀態" className="h-[21px] w-[300px]" />
      <BarBreak />
      <ToolButton name="textStyle" />
      <Combo label="Text style" value="Standard" className="h-[21px] w-[132px]" pad="pl-[21px]" adorn={styleMark} />
      <Sep />
      <ToolButton name="dimStyle" />
      <button type="button" aria-label="More tools" className="ml-auto pr-[2px]">
        <svg className="block h-[9px] w-[12px]" viewBox="0 0 12 9" fill="none"><path d="M1 .5l4 4-4 4M6.500.5l4 4-4 4" stroke="#777" strokeWidth="1.600" /></svg>
      </button>
    </div>
    <div className="flex h-[30px] shrink-0 items-center border-b border-[#9c9c9c] shadow-[inset_0_1px_0_#fff]">
      <span className="flex w-[10px] shrink-0 justify-center"><GripDots /></span>
      <Tools names={['setWin', 'layersIso', 'zoomW', 'zoomP', 'zoomMinus', 'zoomE', 'zoomSel']} />
      <BarBreak />
      <Tools names={['lineTool', 'pencilCurve', 'hatchPens', 'dimTool', 'textTool', 'symTool', 'layerTool', 'angleTool', 'rulerAsk']} />
      <BarBreak />
      <Combo label="Line color" value="ByLayer" className="h-[21px] w-[132px]" pad="pl-[21px]" adorn={colorDot} />
      <Sep />
      <Combo label="Line style" value={'ByLayer\u00a0\u00a0\u00a0\u00a0\u00a0Solid line'} className="h-[21px] w-[132px]" />
      <Sep />
      <Combo label="Line weight" value="ByLayer" className="h-[21px] w-[132px]" pad="pl-[37px]" adorn={weightLine} />
      <Sep />
      <Combo label="Print style" value="" className="h-[21px] w-[132px]" disabled />
    </div>
  </>
);

// ---------- Left tool columns ----------
const COLUMNS = [
  [
    ['line', 'arc', 'polyline', 'circle', 'ellipse', 'polygon', 'rectDim', 'rect', 'donut', 'text'],
    ['erase', 'eraseLayer', 'eraseS', 'copyRect', 'arrayMove', 'rotate', 'stretch', 'scale', 'lengthen', 'alignSp', 'joinPt'],
  ],
  [
    ['trim', 'trimMulti', 'trimCorner', 'extend', 'extendMulti', 'extendEdge', 'extendFence', 'fillet', 'chamfer', 'join', 'mirror', 'mirrorHalf', 'bone', 'grid', 'polar', 'explode'],
    ['chLayer', 'chColor', 'chLine', 'paintBrush', 'chAbc', 'chBits', 'chTxt', 'chNum'],
  ],
  [
    ['sEnd', 'sMid', 'sInt', 'sCen', 'sQuad', 'sIns', 'sTan', 'sPerp', 'sPoint', 'sNear', 'sNone', 'sApp', 'sXy', 'sFrom', 'sMid2', 'sMagnet'],
    ['dict', 'region', 'clip', 'clipZoom', 'loft', 'calc', 'ruler', 'script'],
  ],
];

const ToolColumns = () => (
  <aside className="flex shrink-0 border-b border-[#9c9c9c]">
    {COLUMNS.map((groups, i) => (
      <div key={i} className={`flex flex-col border-r border-[#9c9c9c] ${i === 0 ? 'w-8' : 'w-[31px]'}`}>
        {groups.map((names, g) => (
          <div key={g} className={g > 0 ? 'mt-px border-t border-[#9c9c9c]' : ''}>
            <div className="flex h-[10px] items-center justify-center">
              <span className="h-[3px] w-[25px] bg-[radial-gradient(circle,#a8a8a8_1px,transparent_1px)] bg-[length:4px_3px]" />
            </div>
            {names.map((n) => (
              <button key={n} type="button" aria-label={n} className="flex h-[26px] w-full pl-[3px] hover:bg-[#d5e7f8]">
                <Icon name={n} />
              </button>
            ))}
          </div>
        ))}
      </div>
    ))}
  </aside>
);

// ---------- Drawing area ----------
const Compass = () => (
  <svg className="block h-[150px] w-[150px]" viewBox="-75 -75 150 150" fill="none">
    <circle r="59.250" stroke="#6b6c71" strokeWidth="29.500" />
    {[22.5, 67.5, 112.5, 157.5].map((a) => (
      <path key={a} d="M-75 0H-43M43 0H75" stroke="#000" strokeWidth="4" transform={`rotate(${a})`} />
    ))}
    <path d="M-34 -1.500A34 34 0 0 1 34 -1.500" stroke="#00546f" strokeWidth="13.500" />
    <path d="M-34 2A34 34 0 0 0 34 2" stroke="#6b6c71" strokeWidth="13" />
    <g stroke="#77787c" strokeWidth="1.600">
      <path d="M-13.500 -9h22v22.500h-22zM-13.500 -9l5-5h22.500l-5.500 5M14 -14v22.500l-5.500 5" />
      <path d="M-7.500 -8.500v15h15.500v-15M-7.500 6.500l-6 6.500M8 6.500l5 1" stroke="#505154" strokeWidth="1.200" />
      <path d="M-12.500 -10l4-3.500h21l-4 3.500z" fill="#606165" stroke="none" />
    </g>
  </svg>
);

const navButton = 'flex h-[26px] w-[26px] items-center justify-center border border-[#858585] bg-[#696969]';

const NavButtons = () => (
  <div className="flex flex-col gap-[5px]">
    <button type="button" aria-label="Home" className={navButton}>
      <svg className="h-[18px] w-[18px]" viewBox="0 0 18 18"><path d="M1.500 8.500L9 2l7.500 6.500M3.500 8v7.500h11V8L9 3.500z" fill="#7d8a96" stroke="#40464c" strokeWidth="1.200" /></svg>
    </button>
    <button type="button" aria-label="Rotate left" className={navButton}>
      <svg className="h-[20px] w-[20px] shrink-0" viewBox="0 0 20 20" fill="none">
        <path d="M6 4.200A7.500 7.500 0 1 1 3 12.500" stroke="#5c819b" strokeWidth="1.300" />
        <path d="M1 3.500v5.500h5M1.500 8.500L7 4.500" stroke="#1e82b4" strokeWidth="1.500" />
      </svg>
    </button>
    <button type="button" className={`${navButton} text-[#3c3c3c]`}>90</button>
    <button type="button" aria-label="Rotate right" className={navButton}>
      <svg className="h-[20px] w-[20px] shrink-0" viewBox="0 0 20 20" fill="none">
        <path d="M14 4.200A7.500 7.500 0 1 0 17 12.500" stroke="#5c819b" strokeWidth="1.300" />
        <path d="M19 3.500v5.500h-5M18.500 8.500L13 4.500" stroke="#1e82b4" strokeWidth="1.500" />
      </svg>
    </button>
    <button type="button" aria-label="Settings" className={navButton}>
      <svg className="h-[16px] w-[16px]" viewBox="0 0 16 16" fill="none"><circle cx="8" cy="8" r="3.800" stroke="#333" strokeWidth="3.200" /><circle cx="8" cy="8" r="6.200" stroke="#333" strokeWidth="2" strokeDasharray="2.900 1.970" /></svg>
    </button>
  </div>
);

const SheetTab = ({ label, active, width }) => (
  <button type="button" className={`relative -ml-px flex h-[17px] items-center justify-center ${width} ${active ? 'z-10 font-bold' : ''}`}>
    <svg className="absolute inset-0 h-full w-full" viewBox="0 0 60 17" preserveAspectRatio="none">
      <path d="M0 0q3 6 4 10t5 6h39q5 0 7-5l5-11z" fill={active ? '#fff' : '#c3c3c3'} />
      <path d="M0 0q3 6 4 10t5 6h39q5 0 7-5l5-11" fill="none" stroke="#111" strokeWidth="1.200" />
    </svg>
    <span className="relative">{label}</span>
  </button>
);

const DrawingArea = () => (
  <main className="flex min-w-0 flex-1 flex-col border-r border-[#9c9c9c]">
    <div className="flex h-[25px] shrink-0 border-b border-[#a8a8a8]">
      <div className="flex w-[218px] items-center border-r border-[#a8a8a8] pr-3">
        <button type="button" className="flex-1 pt-px pl-1">NONAME_0.dwg</button>
        <button type="button" aria-label="Close tab">
          <svg className="block h-[11px] w-[11px]" viewBox="0 0 11 11" fill="none"><path d="M.5.5l10 10M10.500.5l-10 10" stroke="#333" strokeWidth="1.100" /></svg>
        </button>
      </div>
      <button type="button" aria-label="New tab" className="flex w-[28px] items-center justify-center border-r border-[#a8a8a8]">
        <svg className="h-[13px] w-[13px]" viewBox="0 0 13 13"><path d="M6.500 0v13M0 6.500h13" stroke="#333" strokeWidth="1.400" /></svg>
      </button>
    </div>
    <div className="h-1 shrink-0 border-b border-[#a0a0a0] bg-white" />
    <div className="relative min-h-0 flex-1 overflow-hidden bg-black">
      <svg className="absolute top-0 left-0 h-[90px] w-[95px]" viewBox="0 0 95 90" fill="none">
        <path d="M0 40.500h94" stroke="#ff0000" />
        <path d="M45.500 0v89" stroke="#00ff00" />
        <path d="M39.500 34.500h12v12h-12z" stroke="#fff" />
      </svg>
      <p className="absolute top-1 left-1 text-sm leading-4 font-bold text-[#dcdcdc]">[-][上 (T)][2D 線架構]</p>
      <div className="absolute top-[10px] right-[46px]"><Compass /></div>
      <div className="absolute top-[10px] right-[10px]"><NavButtons /></div>
      <svg className="absolute bottom-[66px] left-[66px] h-[74px] w-[74px]" viewBox="0 0 74 74" fill="none">
        <path d="M8.500 61V18M4.500 26l4-8 4 8" stroke="#00c800" />
        <path d="M4 3l4.500 6 4.500-6M8.500 9v6" stroke="#00c800" />
        <path d="M13 65.500h43M48 61.500l8 4-8 4" stroke="#ff1e1e" />
        <path d="M60 60l10 11M70 60L60 71" stroke="#ff1e1e" />
        <path d="M4.500 61.500h9v9h-9z" stroke="#ff9b28" />
      </svg>
    </div>
    <div className="flex h-[18px] shrink-0 items-start pl-[2px]">
      <SheetTab label="模型" active width="w-[47px]" />
      <SheetTab label="圖頁 1" width="w-[62px]" />
      <SheetTab label="圖頁 2" width="w-[62px]" />
      <button type="button" aria-label="Add sheet" className="ml-[6px] flex h-[15px] w-[23px] items-center justify-center border border-[#a8a8a8]">
        <svg className="h-[11px] w-[13px]" viewBox="0 0 13 11"><path d="M6.500 0v11M.5 5.500h12" stroke="#333" strokeWidth="1.400" /></svg>
      </button>
    </div>
  </main>
);

// ---------- Properties palette ----------
const SECTIONS = [
  {
    title: '一般',
    rows: [
      { label: '線條色彩', value: 'ByLayer', type: 'select', adorn: colorDot, pad: 'pl-[21px]' },
      { label: '圖層', value: '0', type: 'select' },
      { label: '線條樣式', value: 'ByLayer\u00a0\u00a0\u00a0\u00a0\u00a0Solid line', type: 'select' },
      { label: '直線比例', value: '1' },
      { label: '線寬', value: 'ByLayer', type: 'select', adorn: weightLine, pad: 'pl-[37px]' },
      { label: '超連結', value: '' },
      { label: '透明', value: 'ByLayer', type: 'select' },
    ],
  },
  {
    title: '列印樣式',
    rows: [
      { label: '樣式', value: '', type: 'select', disabled: true },
      { label: '表格', value: '無', type: 'select' },
      { label: '類型', value: '無', locked: true },
      { label: '顯示(D)', value: '否', type: 'select' },
    ],
  },
  {
    title: '檢視',
    rows: [
      { label: '中心 X', value: '344.1869', locked: true },
      { label: '中心 Y', value: '148.5', locked: true },
      { label: '中心 Z', value: '0', locked: true },
      { label: '高度', value: '349.7668', locked: true },
      { label: '寬度', value: '585.973', locked: true },
    ],
  },
  {
    title: '綜合',
    rows: [
      { label: 'CS 圖示位於', value: '是', type: 'select' },
      { label: 'CS 圖示位於原點', value: '是', type: 'select' },
      { label: 'CCS 依檢視視埠', value: '是', type: 'select' },
    ],
  },
];

const PropRow = ({ row, id }) => (
  <div className="flex items-center justify-between pl-2">
    <label htmlFor={id} className="whitespace-nowrap">{row.label}</label>
    {row.type === 'select' ? (
      <Combo id={id} value={row.value} adorn={row.adorn} pad={row.pad} disabled={row.disabled} className="h-[21px] w-[107px]" />
    ) : (
      <input
        id={id}
        defaultValue={row.value}
        readOnly={row.locked}
        className={`h-6 w-[107px] border border-[#a5a5aa] px-[2px] outline-none ${row.locked ? 'bg-[#b1ceec]' : 'bg-white'}`}
      />
    )}
  </div>
);

const Properties = () => (
  <section className="mb-[2px] ml-[3px] flex w-[301px] shrink-0 border-t border-b border-l-2 border-[#85858a]">
    <div className="flex min-w-0 flex-1 flex-col pt-[10px] pr-3 pb-[10px] pl-[10px]">
      <Combo label="Selection" value="無選取" className="h-[21px] w-full" />
      <div className="mt-[6px] flex shrink-0 gap-[6px]">
        {['pSelect', 'pFilter', 'pPick', 'pQuick', 'pHelp'].map((n) => (
          <button key={n} type="button" aria-label={n} className="flex h-[26px] w-[27px] justify-center border border-[#a8a8a8]">
            <Icon name={n} />
          </button>
        ))}
      </div>
      <div className="mt-[7px] flex min-h-0 flex-1">
        <div className="flex min-w-0 flex-1 flex-col gap-[7px] overflow-hidden">
          {SECTIONS.map((s, i) => (
            <div key={s.title} className="shrink-0 border-l border-[#dcdcdc] shadow-[0_1px_0_#dcdcdc]">
              <button
                type="button"
                className="flex h-5 w-full items-center justify-between border border-[#a5a5ad] bg-[#dfe3ff] pr-1 pl-1 font-bold"
              >
                {s.title}
                <svg className="h-[6px] w-[11px]" viewBox="0 0 11 6"><path d="M0 6h11L5.500 0z" /></svg>
              </button>
              <div className="flex flex-col gap-[2px] pt-[13px]">
                {s.rows.map((r, j) => (
                  <PropRow key={r.label} row={r} id={`prop-${i}-${j}`} />
                ))}
              </div>
            </div>
          ))}
        </div>
        <div className="mr-px ml-3 flex w-[14px] shrink-0 flex-col items-center justify-between pt-[5px] pb-[5px]">
          <svg className="h-[5px] w-[9px] shrink-0" viewBox="0 0 9 5"><path d="M0 5h9L4.500 0z" /></svg>
          <span className="mt-[6px] mb-[58px] w-full flex-1 bg-[#cdcdcd]" />
          <svg className="h-[5px] w-[9px] shrink-0" viewBox="0 0 9 5"><path d="M0 0h9L4.500 5z" /></svg>
        </div>
      </div>
    </div>
    <div className="flex w-[26px] shrink-0 flex-col items-center border-r border-l border-[#85858a] bg-[#c0c0c0] pt-1">
      <button type="button" aria-label="Close palette"><CloseIcon /></button>
      <button type="button" aria-label="Pin palette" className="mt-3">
        <svg className="block h-[15px] w-[11px]" viewBox="0 0 11 15"><path d="M1.500 1h8v1.500H8V7l2 1.500v1.500H1V8.500L3 7V2.500H1.500zM5 10h1v4.500H5z" fill="#222" /></svg>
      </button>
      <span className="mt-auto mb-[2px] rotate-180 font-bold [text-orientation:sideways] [writing-mode:vertical-rl]">屬性</span>
      <Icon name="props" />
    </div>
  </section>
);

// ---------- Command window ----------
const CommandWindow = () => (
  <section className="flex h-[113px] shrink-0 flex-col border-r border-[#9c9c9c] pt-px">
    <div className="flex h-[26px] shrink-0 items-center border-t-2 border-b border-l border-[#6e6e6e] bg-[#c0c0c0] pr-1 pl-[3px]">
      <h2 className="flex-1 font-bold">指令視窗</h2>
      <div className="flex gap-1">
        <WinButton label="Float window"><RestoreIcon /></WinButton>
        <WinButton label="Close window"><CloseIcon /></WinButton>
      </div>
    </div>
    <div className="flex min-h-0 flex-1 border-b border-l border-[#9c9c9c] bg-white">
      <div className="flex-1 pt-[3px] pl-1 font-['Liberation_Sans','Noto_Sans_CJK_TC',sans-serif] text-[13px] leading-[15px] text-[#222]">
        <p className="leading-[18px]">正在載入 BIM 自動化作業...</p>
        <p>:</p>
        <p>:</p>
        <p>: T</p>
      </div>
      <div className="flex w-[17px] flex-col items-center bg-[#f0f0f0] pt-[7px] pb-[6px]">
        <svg className="h-[5px] w-[9px]" viewBox="0 0 9 5"><path d="M0 5h9L4.500 0z" /></svg>
        <span className="mt-auto mb-[7px] h-[9px] w-[14px] bg-[#cdcdcd]" />
        <svg className="h-[5px] w-[9px]" viewBox="0 0 9 5"><path d="M0 0h9L4.500 5z" /></svg>
      </div>
    </div>
    <div className="flex h-[15px] shrink-0 items-center bg-white pl-[5px] font-['Liberation_Sans',sans-serif]">
      <label htmlFor="command-line">:</label>
      <input id="command-line" className="h-full flex-1 pl-1 outline-none" />
    </div>
  </section>
);

// ---------- Status bar ----------
const STATUS = [
  [['鎖點', false], ['網格', false], ['正交', false]],
  [
    ['極性', true], ['圖元抓取', true], ['圖元追蹤', false], ['快速輸入', false], ['循環選取', true],
    ['線寬', false], ['模型', true], ['動態 CCS', true], ['AMonitor', false],
  ],
];

const StatusBar = () => (
  <footer className="flex h-[30px] shrink-0 items-center pr-[21px] pl-[3px] whitespace-nowrap">
    <span className="w-[339px] shrink-0 pt-[3px]">ARES Commander 2025 x64</span>
    <div className="flex shrink-0 gap-[7px] pt-[2px]">
      {STATUS.map((group, i) => (
        <div key={i} className="flex gap-[5px]">
          {group.map(([label, on]) => (
            <button
              key={label}
              type="button"
              className={`h-[22px] border px-[6px] ${on ? 'border-[#78aee5] bg-[#d5e7f8]' : 'border-[#a8a8a8]'}`}
            >
              {label}
            </button>
          ))}
        </div>
      ))}
      <div className="relative h-[22px] w-[60px] border border-[#a8a8a8]">
        <select aria-label="Annotation scale" className="block h-full w-full appearance-none bg-transparent pl-[3px] outline-none">
          <option>註記</option>
        </select>
        <svg className="pointer-events-none absolute top-[7px] right-1 h-[7px] w-[12px]" viewBox="0 0 12 7"><path d="M0 0h12L6 7z" fill="#1c1c1c" /></svg>
      </div>
    </div>
    <span className="ml-2 pt-[3px]">(1:1)</span>
    <span className="ml-2 pt-[3px]">(75.6825,295.9246,0)</span>
    <button type="button" aria-label="Location" className="mr-[7px] ml-auto pt-[2px]">
      <svg className="block h-[20px] w-[17px]" viewBox="0 0 17 20" fill="none">
        <path d="M7 1.500a6 6 0 0 1 6 6q0 3-6 10-6-7-6-10a6 6 0 0 1 6-6z" fill="#606060" />
        <circle cx="7" cy="7.500" r="2.800" fill="#f0f0f0" />
        <path d="M11.500 14.500l4 4M15.500 14.500l-4 4" stroke="#c81414" strokeWidth="1.800" />
      </svg>
    </button>
    <button type="button" aria-label="Gizmo" className="flex h-[26px] w-[27px] items-center justify-center border border-[#a8a8a8]">
      <svg className="h-[22px] w-[22px]" viewBox="0 0 22 22" fill="none">
        <circle cx="9" cy="12" r="4" stroke="#555" strokeWidth="1.300" />
        <path d="M9 14.500L7 11h4zM9 6V2M7.500 3.500L9 2l1.500 1.500M14 13.500h5M17.500 12l1.500 1.500-1.500 1.500M5.500 16L2.500 19M2.500 16.500V19H5" stroke="#555" />
        <path d="M14.500 1.500l5 5M19.500 1.500l-5 5" stroke="#c81414" strokeWidth="2.200" />
      </svg>
    </button>
  </footer>
);

const App = () => (
  <div className="flex h-screen flex-col overflow-hidden bg-[#f0f0f0] font-['Noto_Sans','Noto_Sans_CJK_TC',sans-serif] text-xs leading-4 text-black">
    <Header />
    <Toolbars />
    <div className="flex min-h-0 flex-1">
      <ToolColumns />
      <div className="flex min-w-0 flex-1 flex-col">
        <div className="flex min-h-0 flex-1">
          <DrawingArea />
          <Properties />
          <div className="w-[33px] shrink-0 pr-px">
            <button type="button" aria-label="Properties tab" className="flex h-9 w-full items-center justify-center border-r border-b border-[#a8a8a8] bg-[#f3f3f3]">
              <Icon name="props" />
            </button>
          </div>
        </div>
        <CommandWindow />
      </div>
    </div>
    <StatusBar />
  </div>
);

export default App;
